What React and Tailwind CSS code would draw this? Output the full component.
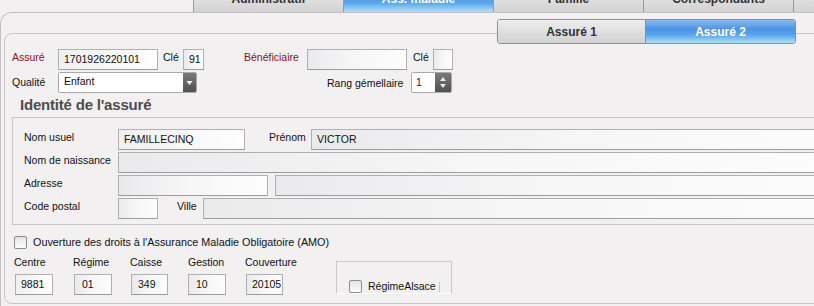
import React from 'react';

const field = "bg-[linear-gradient(to_right,#eaeaec,#f6f6f7_45%,#fdfdfd)]";

function Input({ w, value, className = "" }) {
  return (
    <div className={`h-[21px] shrink-0 border border-[#b0b0b0] border-b-[#9c9c9c] flex items-center pl-[5px] text-[10.5px] text-[#111] ${field} ${w} ${className}`}>
      {value}
    </div>
  );
}

function Check({ className = "" }) {
  return <div className={`w-[13px] h-[13px] shrink-0 rounded-[2px] border border-[#8c8c8c] bg-[linear-gradient(to_bottom,#e4e4e4,#fdfdfd)] ${className}`}></div>;
}

function Label({ children, className = "" }) {
  return <span className={`text-[10.5px] text-[#111] whitespace-nowrap shrink-0 ${className}`}>{children}</span>;
}

const blue = "bg-[linear-gradient(to_bottom,#8cbcf0_0%,#4d93e4_40%,#5aa6ea_65%,#aee0f8_100%)]";
const gray = "bg-[linear-gradient(to_bottom,#eeeeee_0%,#dedede_55%,#d2d2d2_100%)]";

export default function App() {
  const tabs = [
    { label: 'Administratif', active: false },
    { label: 'Ass. maladie', active: true },
    { label: 'Famille', active: false },
    { label: 'Correspondants', active: false },
    { label: '', active: false },
  ];

  return (
    <div className="w-[814px] h-[306px] overflow-hidden bg-[#f2f0f1] font-['Liberation_Sans',Arial,sans-serif] flex flex-col">
      {/* onglets principaux */}
      <div className="h-[12px] flex items-end pl-[193px] shrink-0">
        {tabs.map((t, i) => (
          <div
            key={i}
            className={`w-[150px] h-[26px] shrink-0 border-l border-[#9a9a9a] flex items-center justify-center text-[12px] font-bold ${t.active ? `${blue} text-white` : `${gray} text-[#333]`}`}
          >
            {t.label}
          </div>
        ))}
      </div>

      <div className="flex-1 border-t border-l border-[#c2c2c2] rounded-tl-[12px] pl-[3px] pt-[6px]">
        {/* Assuré 1 / Assuré 2 */}
        <div className="relative z-10 h-[25px] -mb-[11px] flex pl-[493px]">
          <div className="flex rounded-[3px] border border-[#8e8e8e] overflow-hidden">
            <div className={`w-[148px] flex items-center justify-center text-[12px] font-bold text-[#333] border-r border-[#8e8e8e] ${gray}`}>Assuré 1</div>
            <div className={`w-[149px] flex items-center justify-center text-[12px] font-bold text-white ${blue}`}>Assuré 2</div>
          </div>
        </div>

        <div className="w-[900px] h-[271px] border border-[#c6c6c6] rounded-l-[8px] pl-[7px] pt-[15px]">
          {/* ligne 1 */}
          <div className="h-[21px] flex items-center">
            <Label className="w-[46px] text-[#8b1414]! pb-[3px]">Assuré</Label>
            <Input w="w-[100px]" value="1701926220101" className="bg-[linear-gradient(to_right,#f0f0f0,#fefefe)]!" />
            <Label className="ml-[5px] w-[20px] pb-[3px]">Clé</Label>
            <Input w="w-[21px]" value="91" className="bg-white! pl-[3px]" />
            <Label className="ml-[40px] w-[63px] text-[#8b1414]! pb-[3px]">Bénéficiaire</Label>
            <Input w="w-[100px]" value="" />
            <Label className="ml-[6px] w-[20px] pb-[3px]">Clé</Label>
            <Input w="w-[20px]" value="" />
          </div>

          {/* ligne 2 */}
          <div className="mt-[2px] h-[21px] flex items-center">
            <Label className="w-[46px]">Qualité</Label>
            <div className="w-[139px] h-[21px] flex border border-[#a8a8a8] rounded-[2px] overflow-hidden">
              <div className="flex-1 bg-white flex items-center pl-[5px] text-[10.5px] text-[#111] pb-[2px]">Enfant</div>
              <div className="w-[13px] bg-[linear-gradient(to_bottom,#7a7a7a,#505050)] flex items-center justify-center">
                <svg width="7" height="6" viewBox="0 0 7 6"><path d="M0.5 1 L6.5 1 L3.5 5 Z" fill="#fff" /></svg>
              </div>
            </div>
            <div className="w-[130px]"></div>
            <Label className="w-[84px] pt-[3px]">Rang gémellaire</Label>
            <div className="w-[41px] h-[21px] flex border border-[#a8a8a8] rounded-[2px] overflow-hidden">
              <div className="flex-1 bg-white flex items-center pl-[4px] text-[10.5px] text-[#3a0a4a]">1</div>
              <div className="w-[16px] bg-[linear-gradient(to_bottom,#7a7a7a,#505050)] flex flex-col items-center justify-center gap-[3px]">
                <svg width="6" height="4" viewBox="0 0 6 4"><path d="M0 4 L6 4 L3 0 Z" fill="#e8e8e8" /></svg>
                <svg width="6" height="4" viewBox="0 0 6 4"><path d="M0 0 L6 0 L3 4 Z" fill="#e8e8e8" /></svg>
              </div>
            </div>
          </div>

          {/* titre */}
          <div className="mt-[4px] h-[16px] leading-[16px] pl-[8px] text-[15px] font-bold text-[#4d4d4d] tracking-[-0.2px]">
            Identité de l'assuré
          </div>

          {/* bloc identité */}
          <div className="mt-[4px] h-[108px] border border-[#c6c6c6] pl-[11px] pt-[11px] flex flex-col gap-[2px]">
            <div className="h-[21px] flex items-center">
              <Label className="w-[94px] pb-[4px]">Nom usuel</Label>
              <Input w="w-[127px]" value="FAMILLECINQ" className="bg-[linear-gradient(to_right,#f0f0f0,#fefefe)]!" />
              <Label className="ml-[24px] w-[42px] pb-[4px]">Prénom</Label>
              <Input w="flex-1" value="VICTOR" />
            </div>
            <div className="h-[21px] flex items-center">
              <Label className="w-[94px] pb-[4px]">Nom de naissance</Label>
              <Input w="flex-1" value="" />
            </div>
            <div className="h-[21px] flex items-center">
              <Label className="w-[94px] pb-[4px]">Adresse</Label>
              <Input w="w-[150px]" value="" />
              <Input w="flex-1" value="" className="ml-[7px]" />
            </div>
            <div className="h-[21px] flex items-center">
              <Label className="w-[94px] pb-[4px]">Code postal</Label>
              <Input w="w-[40px]" value="" />
              <Label className="ml-[19px] w-[26px] pb-[4px]">Ville</Label>
              <Input w="flex-1" value="" />
            </div>
          </div>

          {/* AMO */}
          <div className="mt-[10px] h-[14px] flex items-center pl-[2px]">
            <Check />
            <Label className="ml-[6px] text-[10.8px]!">Ouverture des droits à l'Assurance Maladie Obligatoire (AMO)</Label>
          </div>

          <div className="mt-[6px] flex items-start">
            <div className="ml-[2px] w-[59px] flex flex-col">
              <Label className="h-[14px] leading-[14px]">Centre</Label>
              <Input w="w-[38px]" value="9881" className="mt-[5px] ml-[1px] bg-[linear-gradient(to_right,#f0f0f0,#fefefe)]!" />
            </div>
            <div className="w-[57px] flex flex-col">
              <Label className="h-[14px] leading-[14px]">Régime</Label>
              <Input w="w-[38px]" value="01" className="mt-[5px] ml-[1px] pl-[7px]" />
            </div>
            <div className="w-[58px] flex flex-col">
              <Label className="h-[14px] leading-[14px]">Caisse</Label>
              <Input w="w-[37px]" value="349" className="mt-[5px] ml-[1px] pl-[6px]" />
            </div>
            <div className="w-[57px] flex flex-col">
              <Label className="h-[14px] leading-[14px]">Gestion</Label>
              <Input w="w-[38px]" value="10" className="mt-[5px] pl-[7px]" />
            </div>
            <div className="w-[60px] flex flex-col">
              <Label className="h-[14px] leading-[14px]">Couverture</Label>
              <Input w="w-[37px]" value="20105" className="mt-[5px] ml-[1px] pl-[3px]" />
            </div>
            <div className="ml-[31px] mt-[6px] w-[116px] h-[33px] border border-[#c8c8c8] border-b-white pl-[12px] pt-[17px]">
              <div className="flex items-center">
                <Check />
                <Label className="ml-[6px]">RégimeAlsace</Label>
                <div className="ml-[3px] w-[1px] h-[10px] bg-[#f3c46a]"></div>
              </div>
            </div>
          </div>
        </div>
      </div>
    </div>
  );
}
